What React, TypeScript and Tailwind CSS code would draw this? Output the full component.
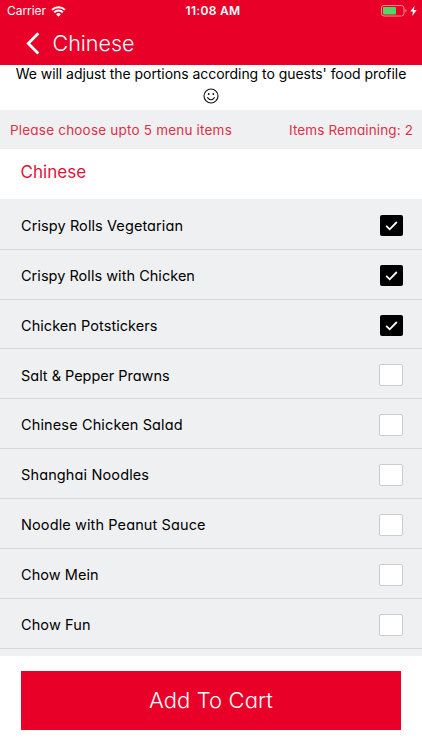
import React, { useState } from "react";

interface MenuItem {
  name: string;
  selected: boolean;
  tracking: string;
}

const initialItems: MenuItem[] = [
  { name: "Crispy Rolls Vegetarian", selected: true, tracking: "tracking-[0.09px]" },
  { name: "Crispy Rolls with Chicken", selected: true, tracking: "tracking-[0.03px]" },
  { name: "Chicken Potstickers", selected: true, tracking: "tracking-[0.05px]" },
  { name: "Salt & Pepper Prawns", selected: false, tracking: "tracking-[-0.02px]" },
  { name: "Chinese Chicken Salad", selected: false, tracking: "tracking-[0.13px]" },
  { name: "Shanghai Noodles", selected: false, tracking: "tracking-[0.13px]" },
  { name: "Noodle with Peanut Sauce", selected: false, tracking: "tracking-[0.11px]" },
  { name: "Chow Mein", selected: false, tracking: "tracking-[0.06px]" },
  { name: "Chow Fun", selected: false, tracking: "tracking-[0.1px]" },
];

const StatusBar: React.FC = () => (
  <div className="grid h-[22px] grid-cols-3 items-center pr-[5px] pl-[7px] text-white">
    <div className="flex items-center gap-[5px]">
      <span className="text-[12px] leading-none tracking-[-0.05px]">Carrier</span>
      <svg className="h-[11px] w-[15px]" viewBox="0 0 15 11" fill="none" stroke="currentColor">
        <path d="M1 3.9a9.4 9.4 0 0 1 13 0" strokeWidth="2" />
        <path d="M3.1 6.4a6.3 6.3 0 0 1 8.8 0" strokeWidth="2" />
        <path d="M5.1 8.2a3.5 3.5 0 0 1 4.8 0L7.5 10.7Z" fill="currentColor" stroke="none" />
      </svg>
    </div>
    <span className="pl-[2px] text-center text-[12px] leading-none font-semibold tracking-[0.3px] whitespace-nowrap">
      11:08 AM
    </span>
    <div className="flex items-center justify-end gap-[3px]">
      <svg className="h-[12px] w-[27px]" viewBox="0 0 27 12">
        <rect x="1.5" y="0.5" width="22.5" height="10.5" rx="2.5" fill="none" stroke="#f58a98" />
        <rect x="3" y="2" width="13" height="7.5" rx="1" fill="#4cd964" />
        <path d="M25.4 4v3.6q1.2-.5 1.2-1.8T25.4 4Z" fill="#f58a98" />
      </svg>
      <svg className="h-[10px] w-[7px]" viewBox="0 0 7 10" fill="currentColor">
        <path d="M4.5 0 0.3 5.6H3L2.2 10 6.7 4.1H3.9Z" />
      </svg>
    </div>
  </div>
);

const Checkbox: React.FC<{ checked: boolean }> = ({ checked }) =>
  checked ? (
    <span className="flex h-[21px] w-[23px] items-center justify-center rounded-[2px] bg-black">
      <svg className="h-[10px] w-[13px]" viewBox="0 0 13 10" fill="none" stroke="#fff" strokeWidth="1.8">
        <path d="M1.2 4.8 4.7 8.3 11.8 1" />
      </svg>
    </span>
  ) : (
    <span className="h-[22px] w-[24px] rounded-[2px] border border-[#cbcccd] bg-white" />
  );

export default function App() {
  const [items, setItems] = useState(initialItems);

  const toggle = (name: string) => {
    setItems(items.map((item) => (item.name === name ? { ...item, selected: !item.selected } : item)));
  };

  return (
    <div className="flex h-[750px] w-[422px] flex-col overflow-hidden bg-white font-['Inter',sans-serif] text-black">
      <header className="h-[65px] shrink-0 bg-[#e90029]">
        <StatusBar />
        <div className="flex h-[43px] items-center pl-[26px] text-white">
          <svg className="h-[23px] w-[14px]" viewBox="0 0 14 23" fill="none" stroke="currentColor" strokeWidth="2.8">
            <path d="M12.3 1.3 2.3 11.4l10 10.1" />
          </svg>
          <h1 className="ml-[12.5px] text-[21.5px] leading-none font-light [font-feature-settings:'cv11']">Chinese</h1>
        </div>
      </header>

      {/* Portion note */}
      <div className="flex h-[45px] shrink-0 flex-col items-center">
        <p className="text-[14px] leading-[18px] tracking-[-0.05px] whitespace-nowrap">
          We will adjust the portions according to guests' food profile
        </p>
        <svg className="mt-[5px] size-4" viewBox="0 0 16 16" fill="none" stroke="#111">
          <circle cx="8" cy="8" r="7" strokeWidth="1.1" />
          <path d="M4.3 9.3Q8 14.2 11.7 9.3" strokeWidth="1.1" />
          <ellipse cx="5.7" cy="6" rx=".9" ry="1.1" fill="#111" stroke="none" />
          <ellipse cx="10.3" cy="6" rx=".9" ry="1.1" fill="#111" stroke="none" />
        </svg>
      </div>

      <div className="flex h-[39px] shrink-0 items-center justify-between bg-[#eff0f2] pt-px pr-[9px] pl-[10px] text-[13.5px] tracking-[0.2px] text-[#dc3049] [font-feature-settings:'cv11']">
        <span>Please choose upto 5 menu items</span>
        <span className="tracking-[0.12px]">Items Remaining: 2</span>
      </div>

      <h2 className="flex h-[50px] shrink-0 items-center pb-[3px] pl-[20.5px] text-[17px] tracking-[0.05px] text-[#dc143c] [font-feature-settings:'cv11']">
        Chinese
      </h2>

      <ul className="h-[457px] shrink-0 overflow-hidden bg-[#eff0f2] pt-[0.8px] [font-feature-settings:'cv11']">
        {items.map((item) => (
          <li
            key={item.name}
            onClick={() => toggle(item.name)}
            className="flex h-[49.9px] items-center justify-between border-b border-[#d5d6d8] pt-[3px] pr-[19px] pl-[21px] text-[14.5px]"
          >
            <span className={item.tracking}>{item.name}</span>
            <Checkbox checked={item.selected} />
          </li>
        ))}
      </ul>

      <div className="flex flex-1 items-start bg-white px-[21px] pt-[15px]">
        <button className="h-[59px] w-full bg-[#e90029] text-[22px] font-light tracking-[0.1px] text-white [font-feature-settings:'cv11']">
          Add To Cart
        </button>
      </div>
    </div>
  );
}
